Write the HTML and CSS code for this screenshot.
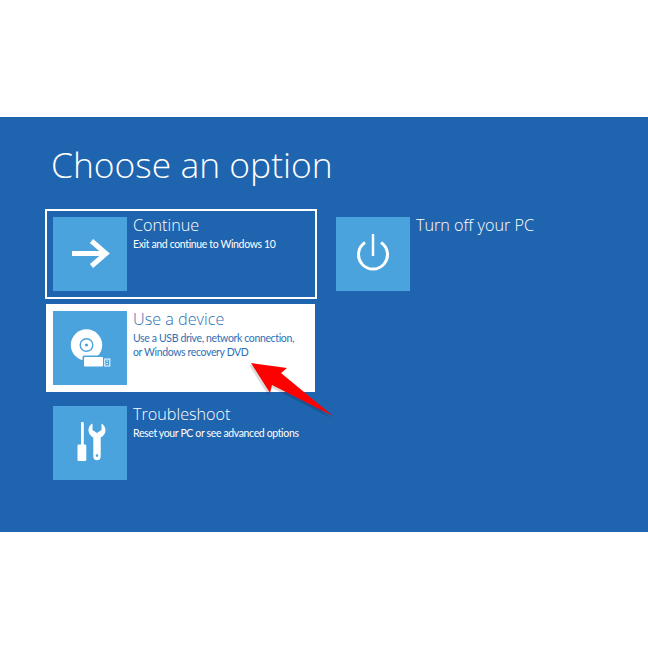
FILE: index.html

```html
<!DOCTYPE html>
<html lang="en">
<head>
  <meta charset="UTF-8" />
  <meta name="viewport" content="width=device-width, initial-scale=1.0" />
  <title>Choose an option</title>
  <link rel="stylesheet" href="styles.css">
</head>
<body>
  <div class="screen">
    <h1>Choose an option</h1>
    <div class="options">
      <div class="column">
        <div class="tile selected">
          <div class="icon">
            <svg width="74" height="74" viewBox="0 0 74 74">
              <path d="M19 36.500H53M38.500 24L53 36.500L38.500 49" fill="none" stroke="#fff" stroke-width="5"/>
            </svg>
          </div>
          <div class="tile-text">
            <h2>Continue</h2>
            <p>Exit and continue to Windows 10</p>
          </div>
        </div>
        <div class="tile hover">
          <div class="icon">
            <svg width="74" height="74" viewBox="0 0 74 74">
              <circle cx="33.500" cy="34" r="15.700" fill="#fff"/>
              <circle cx="33.500" cy="34" r="6.300" fill="none" stroke="#4ba3dd" stroke-width="1.400"/>
              <circle cx="33.500" cy="34" r="1.600" fill="#4ba3dd"/>
              <rect x="29.500" y="44.500" width="22" height="12.500" rx="1.500" fill="#4ba3dd"/>
              <rect x="31" y="46" width="19" height="9.500" rx="1" fill="#fff"/>
              <rect x="51.800" y="48" width="5" height="7" fill="none" stroke="#fff"/>
              <path d="M53.500 50H55M53.500 52.500H55" stroke="#fff" stroke-width="1"/>
            </svg>
          </div>
          <div class="tile-text">
            <h2>Use a device</h2>
            <p>Use a USB drive, network connection,<br>or Windows recovery DVD</p>
          </div>
        </div>
        <div class="tile">
          <div class="icon">
            <svg width="74" height="74" viewBox="0 0 74 74">
              <rect x="28" y="16" width="2.800" height="24" rx="1" fill="#fff"/>
              <rect x="24.500" y="38.500" width="8.800" height="16.500" rx="1.200" fill="#fff"/>
              <path fill-rule="evenodd" fill="#fff" d="M39.500 17.500C36.500 19 35.500 21.500 35.500 24C35.500 27.500 37.500 30 40.300 31.500V50.500A3.700 3.700 0 0 0 47.700 50.500V31.500C50.500 30 52.500 27.500 52.500 24C52.500 21.500 51 19 48.500 17.500V24L44 27L39.500 24ZM44 48.300A1.300 1.300 0 1 1 44 50.900A1.300 1.300 0 1 1 44 48.300Z"/>
            </svg>
          </div>
          <div class="tile-text">
            <h2>Troubleshoot</h2>
            <p>Reset your PC or see advanced options</p>
          </div>
        </div>
      </div>
      <div class="column">
        <div class="tile">
          <div class="icon">
            <svg width="74" height="74" viewBox="0 0 74 74">
              <path d="M29 25.500A14.500 14.500 0 1 0 45 25.500" fill="none" stroke="#fff" stroke-width="3"/>
              <path d="M37 17V39" stroke="#fff" stroke-width="2.500"/>
            </svg>
          </div>
          <div class="tile-text">
            <h2>Turn off your PC</h2>
          </div>
        </div>
      </div>
    </div>
  </div>

  <svg class="pointer" width="648" height="648" viewBox="0 0 648 648">
    <path d="M249 365L285 370L279 375L331 418L270 387L268 395Z" fill="#000" opacity="0.14"/>
    <path d="M251 363L287 368L281 373L333 416L272 385L270 393Z" fill="#f00"/>
  </svg>
</body>
</html>
```

FILE: styles.css

```css
body {
  font-family: "Open Sans", Arial, sans-serif;
  margin: 0;
  padding: 117px 0 0;
  background: white;
  position: relative;
  height: 531px;
  overflow: hidden;
}
.screen {
  background: #1f64ae;
  height: 415px;
  padding: 22px 0 0 45px;
  box-sizing: border-box;
  color: white;
}
h1 {
  font-size: 35.4px;
  font-weight: 300;
  line-height: 50px;
  margin: 0 0 20px 6px;
}
.options {
  display: flex;
  gap: 11px;
}
.column {
  display: flex;
  flex-direction: column;
  gap: 4px;
}
.tile {
  display: flex;
  width: 272px;
  height: 90px;
  box-sizing: border-box;
  padding: 6px;
  border: 2px solid transparent;
  background-clip: padding-box;
}
.selected {
  border-color: white;
}
.hover {
  background-color: white;
  color: #2e6fb5;
  border-width: 1px 2px 1px 1px;
  padding: 7px 6px 7px 7px;
  margin-bottom: 1px;
}
.icon {
  width: 74px;
  height: 74px;
  flex: none;
  background: #4ba3dd;
}
.icon svg {
  display: block;
}
.tile-text {
  margin-left: 6px;
}
h2 {
  font-size: 16.2px;
  font-weight: 300;
  line-height: 20px;
  margin: -2px 0 2px;
}
p {
  font-family: Lato, Arial, sans-serif;
  font-size: 10.5px;
  letter-spacing: -0.36px;
  line-height: 14px;
  margin: 0;
}
.pointer {
  position: absolute;
  left: 0;
  top: 0;
}
```
